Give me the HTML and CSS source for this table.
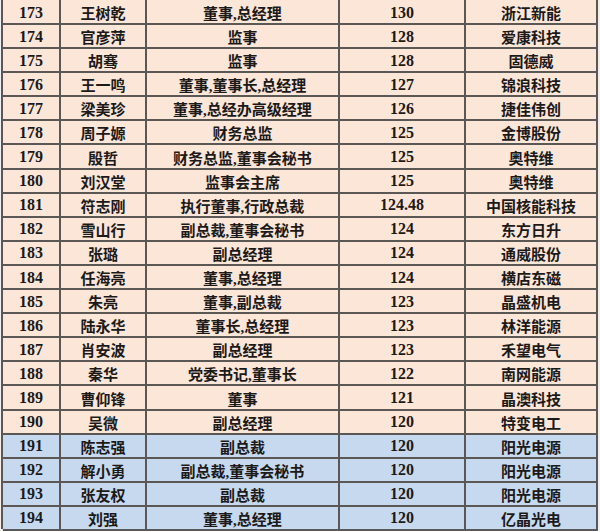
FILE: index.html
```html
<!DOCTYPE html>
<html lang="zh-CN">
<head>
<meta charset="utf-8">
<title>高管薪酬排名</title>
<link rel="stylesheet" href="styles.css">
</head>
<body>
<div class="sheet">
  <div class="row"><div class="c">173</div><div class="c">王树乾</div><div class="c">董事,总经理</div><div class="c">130</div><div class="c">浙江新能</div></div>
  <div class="row"><div class="c">174</div><div class="c">官彦萍</div><div class="c">监事</div><div class="c">128</div><div class="c">爱康科技</div></div>
  <div class="row"><div class="c">175</div><div class="c">胡骞</div><div class="c">监事</div><div class="c">128</div><div class="c">固德威</div></div>
  <div class="row"><div class="c">176</div><div class="c">王一鸣</div><div class="c">董事,董事长,总经理</div><div class="c">127</div><div class="c">锦浪科技</div></div>
  <div class="row"><div class="c">177</div><div class="c">梁美珍</div><div class="c">董事,总经办高级经理</div><div class="c">126</div><div class="c">捷佳伟创</div></div>
  <div class="row"><div class="c">178</div><div class="c">周子嫄</div><div class="c">财务总监</div><div class="c">125</div><div class="c">金博股份</div></div>
  <div class="row"><div class="c">179</div><div class="c">殷哲</div><div class="c">财务总监,董事会秘书</div><div class="c">125</div><div class="c">奥特维</div></div>
  <div class="row"><div class="c">180</div><div class="c">刘汉堂</div><div class="c">监事会主席</div><div class="c">125</div><div class="c">奥特维</div></div>
  <div class="row"><div class="c">181</div><div class="c">符志刚</div><div class="c">执行董事,行政总裁</div><div class="c">124.48</div><div class="c">中国核能科技</div></div>
  <div class="row"><div class="c">182</div><div class="c">雪山行</div><div class="c">副总裁,董事会秘书</div><div class="c">124</div><div class="c">东方日升</div></div>
  <div class="row"><div class="c">183</div><div class="c">张璐</div><div class="c">副总经理</div><div class="c">124</div><div class="c">通威股份</div></div>
  <div class="row"><div class="c">184</div><div class="c">任海亮</div><div class="c">董事,总经理</div><div class="c">124</div><div class="c">横店东磁</div></div>
  <div class="row"><div class="c">185</div><div class="c">朱亮</div><div class="c">董事,副总裁</div><div class="c">123</div><div class="c">晶盛机电</div></div>
  <div class="row"><div class="c">186</div><div class="c">陆永华</div><div class="c">董事长,总经理</div><div class="c">123</div><div class="c">林洋能源</div></div>
  <div class="row"><div class="c">187</div><div class="c">肖安波</div><div class="c">副总经理</div><div class="c">123</div><div class="c">禾望电气</div></div>
  <div class="row"><div class="c">188</div><div class="c">秦华</div><div class="c">党委书记,董事长</div><div class="c">122</div><div class="c">南网能源</div></div>
  <div class="row"><div class="c">189</div><div class="c">曹仰锋</div><div class="c">董事</div><div class="c">121</div><div class="c">晶澳科技</div></div>
  <div class="row"><div class="c">190</div><div class="c">吴微</div><div class="c">副总经理</div><div class="c">120</div><div class="c">特变电工</div></div>
  <div class="row blue"><div class="c">191</div><div class="c">陈志强</div><div class="c">副总裁</div><div class="c">120</div><div class="c">阳光电源</div></div>
  <div class="row blue"><div class="c">192</div><div class="c">解小勇</div><div class="c">副总裁,董事会秘书</div><div class="c">120</div><div class="c">阳光电源</div></div>
  <div class="row blue"><div class="c">193</div><div class="c">张友权</div><div class="c">副总裁</div><div class="c">120</div><div class="c">阳光电源</div></div>
  <div class="row blue"><div class="c">194</div><div class="c">刘强</div><div class="c">董事,总经理</div><div class="c">120</div><div class="c">亿晶光电</div></div>
</div>
</body>
</html>
```
FILE: styles.css
```css
html, body {
  margin: 0;
  padding: 0;
}
body {
  background: #f2f0ef;
  width: 600px;
  height: 531px;
  overflow: hidden;
  font-family: "Liberation Serif", "Noto Sans CJK SC", serif;
  color: #1c1a19;
}
.sheet {
  margin: -1px 0 0 1px;
  width: 597px;
  border-left: 2px solid #5b5755;
  box-sizing: border-box;
}
.row {
  display: grid;
  grid-template-columns: 58px 86px 193px 126px 132px;
  height: 24.1px;
  background: #fbe6d8;
}
.row.blue {
  background: #c7d9ef;
}
.c {
  box-sizing: border-box;
  border-right: 2px solid #5b5755;
  border-bottom: 2px solid #5b5755;
  display: flex;
  align-items: center;
  justify-content: center;
  padding-top: 3px;
  font-size: 15px;
  font-weight: 700;
  white-space: nowrap;
}
.c:nth-child(1), .c:nth-child(4) {
  font-size: 16px;
}
```
